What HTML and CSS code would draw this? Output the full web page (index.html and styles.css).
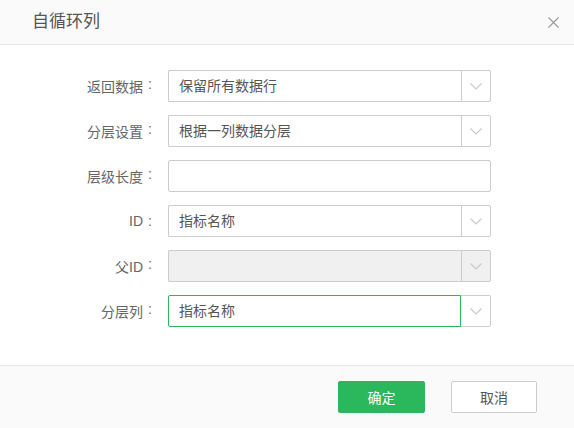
FILE: index.html
```html
<!DOCTYPE html>
<html lang="zh-CN">
<head>
  <meta charset="UTF-8" />
  <meta name="viewport" content="width=device-width, initial-scale=1.0" />
  <title>自循环列</title>
  <link rel="stylesheet" href="styles.css">
</head>
<body>
  <div class="dialog">
    <div class="dialog-header">
      <span class="dialog-title">自循环列</span>
      <span class="dialog-close">
        <svg width="11" height="11" viewBox="0 0 11 11"><path d="M0.5 0.5L10.5 10.5M10.5 0.5L0.5 10.5" stroke="#999" stroke-width="1.1" fill="none"/></svg>
      </span>
    </div>

    <div class="dialog-body">
      <div class="form-row">
        <label class="form-label"><span>返回数据</span><span class="colon">:</span></label>
        <div class="select">
          <div class="select-value">保留所有数据行</div>
          <div class="select-arrow"><svg width="12" height="7" viewBox="0 0 12 7"><path d="M0.5 0.5L6 6L11.5 0.5" stroke="#c8c8c8" stroke-width="1.1" fill="none"/></svg></div>
        </div>
      </div>
      <div class="form-row">
        <label class="form-label"><span>分层设置</span><span class="colon">:</span></label>
        <div class="select">
          <div class="select-value">根据一列数据分层</div>
          <div class="select-arrow"><svg width="12" height="7" viewBox="0 0 12 7"><path d="M0.5 0.5L6 6L11.5 0.5" stroke="#c8c8c8" stroke-width="1.1" fill="none"/></svg></div>
        </div>
      </div>
      <div class="form-row">
        <label class="form-label"><span>层级长度</span><span class="colon">:</span></label>
        <div class="input"></div>
      </div>
      <div class="form-row">
        <label class="form-label"><span>ID</span><span class="colon">:</span></label>
        <div class="select">
          <div class="select-value">指标名称</div>
          <div class="select-arrow"><svg width="12" height="7" viewBox="0 0 12 7"><path d="M0.5 0.5L6 6L11.5 0.5" stroke="#c8c8c8" stroke-width="1.1" fill="none"/></svg></div>
        </div>
      </div>
      <div class="form-row">
        <label class="form-label"><span>父ID</span><span class="colon">:</span></label>
        <div class="select disabled">
          <div class="select-value"></div>
          <div class="select-arrow"><svg width="12" height="7" viewBox="0 0 12 7"><path d="M0.5 0.5L6 6L11.5 0.5" stroke="#c8c8c8" stroke-width="1.1" fill="none"/></svg></div>
        </div>
      </div>
      <div class="form-row">
        <label class="form-label"><span>分层列</span><span class="colon">:</span></label>
        <div class="select focused">
          <div class="select-value">指标名称</div>
          <div class="select-arrow"><svg width="12" height="7" viewBox="0 0 12 7"><path d="M0.5 0.5L6 6L11.5 0.5" stroke="#c8c8c8" stroke-width="1.1" fill="none"/></svg></div>
        </div>
      </div>
    </div>

    <div class="dialog-footer">
      <button class="btn btn-primary">确定</button>
      <button class="btn">取消</button>
    </div>
  </div>
</body>
</html>
```

FILE: styles.css
```css
* {
  box-sizing: border-box;
}

html, body {
  margin: 0;
  padding: 0;
  width: 100%;
  height: 100%;
  background-color: #fff;
  font-family: "Liberation Sans", "Noto Sans CJK SC", sans-serif;
  overflow: hidden;
}

.dialog {
  width: 574px;
  height: 428px;
  display: flex;
  flex-direction: column;
  background: #fff;
}

.dialog-header {
  height: 45px;
  border-bottom: 1px solid #e8e8e8;
  background: #fafafa;
  display: flex;
  align-items: center;
  justify-content: space-between;
  padding: 0 15px 0 32px;
}

.dialog-title {
  font-size: 17px;
  line-height: 20px;
  color: #555;
}

.dialog-close {
  display: flex;
}

.dialog-body {
  flex: 1;
  padding-top: 25px;
  display: flex;
  flex-direction: column;
  gap: 13px;
}

.form-row {
  display: flex;
  align-items: center;
  height: 32px;
}

.form-label {
  width: 168px;
  padding-right: 11px;
  display: flex;
  justify-content: flex-end;
  font-size: 14px;
  color: #666;
}

.colon {
  width: 14px;
  text-align: center;
}

.select,
.input {
  width: 323px;
  height: 32px;
  display: flex;
}

.input {
  border: 1px solid #ccc;
  border-radius: 2px;
}

.select-value {
  flex: 1;
  border: 1px solid #ccc;
  border-right: none;
  border-radius: 2px 0 0 2px;
  padding: 0 10px;
  font-size: 14px;
  line-height: 30px;
  color: #555;
}

.select-arrow {
  width: 30px;
  border: 1px solid #ccc;
  border-radius: 0 2px 2px 0;
  display: flex;
  align-items: center;
  justify-content: center;
  padding-top: 1px;
}

.select.focused .select-value {
  border-color: #2db55d;
  border-right: 1px solid #2db55d;
}

.select.focused .select-arrow {
  border-left: none;
}

.select.disabled .select-value,
.select.disabled .select-arrow {
  background: #f0f0f0;
}

.dialog-footer {
  height: 63px;
  border-top: 1px solid #e8e8e8;
  background: #fafafa;
  display: flex;
  align-items: center;
  justify-content: flex-end;
  gap: 26px;
  padding-right: 37px;
}

.btn {
  width: 86px;
  height: 32px;
  border: 1px solid #ccc;
  border-radius: 2px;
  background: #fff;
  color: #555;
  font-family: inherit;
  font-size: 14px;
  cursor: pointer;
}

.btn-primary {
  width: 87px;
  background: #2bb75c;
  border-color: #2bb75c;
  color: #fff;
}
```
